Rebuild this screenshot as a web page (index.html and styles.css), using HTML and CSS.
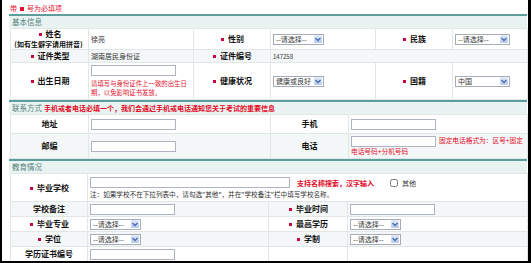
FILE: index.html
```html
<!DOCTYPE html>
<html>

<head>
	<meta charset="UTF-8">
	<title>报名信息</title>
	<link rel="stylesheet" href="styles.css">
</head>

<body>
	<div class="page">
		<p class="note">带<em class="req"></em>号为必填项</p>

		<div class="sec-head">基本信息</div>
		<table class="form six">
			<colgroup>
				<col style="width:78px"><col style="width:105px"><col style="width:77px">
				<col style="width:105px"><col style="width:77px"><col>
			</colgroup>
			<tr class="row-name">
				<th><em class="req"></em>姓名<br><span class="hint">(如有生僻字请用拼音)</span></th>
				<td>徐亮</td>
				<th><em class="req"></em>性别</th>
				<td><span class="select">--请选择--<i class="arrow"><svg viewBox="0 0 8 8"><path d="M1.5 3 L4 5.5 L6.5 3" /></svg></i></span></td>
				<th><em class="req"></em>民族</th>
				<td><span class="select wide">--请选择--<i class="arrow"><svg viewBox="0 0 8 8"><path d="M1.5 3 L4 5.5 L6.5 3" /></svg></i></span></td>
			</tr>
			<tr class="row-id shade">
				<th><em class="req"></em>证件类型</th>
				<td>湖南居民身份证</td>
				<th><em class="req"></em>证件编号</th>
				<td colspan="3" class="num">147258</td>
			</tr>
			<tr class="row-birth">
				<th><em class="req"></em>出生日期</th>
				<td>
					<input class="text" type="text">
					<p class="red-tip">请填写与身份证件上一致的出生日期，以免影响证书发放。</p>
				</td>
				<th><em class="req"></em>健康状况</th>
				<td><span class="select">健康或良好<i class="arrow"><svg viewBox="0 0 8 8"><path d="M1.5 3 L4 5.5 L6.5 3" /></svg></i></span></td>
				<th><em class="req"></em>国籍</th>
				<td><span class="select wide">中国<i class="arrow"><svg viewBox="0 0 8 8"><path d="M1.5 3 L4 5.5 L6.5 3" /></svg></i></span></td>
			</tr>
		</table>

		<div class="sec-head">联系方式<strong class="warn">手机或者电话必填一个，我们会通过手机或电话通知您关于考试的重要信息</strong></div>
		<table class="form four">
			<colgroup>
				<col style="width:78px"><col style="width:182px"><col style="width:78px"><col>
			</colgroup>
			<tr class="row-addr">
				<th>地址</th>
				<td><input class="text" type="text"></td>
				<th>手机</th>
				<td><input class="text" type="text"></td>
			</tr>
			<tr class="row-post shade">
				<th>邮编</th>
				<td><input class="text" type="text"></td>
				<th>电话</th>
				<td><input class="text" type="text"><span class="red-inline">固定电话格式为：区号+固定电话号码+分机号码</span></td>
			</tr>
		</table>

		<div class="sec-head">教育情况</div>
		<table class="form four edu">
			<colgroup>
				<col style="width:77px"><col style="width:181px"><col style="width:79px"><col>
			</colgroup>
			<tr class="row-school">
				<th><em class="req"></em>毕业学校</th>
				<td colspan="3">
					<div class="school-line">
						<input class="text long" type="text">
						<strong class="warn search">支持名称搜索，汉字输入</strong>
						<label class="other"><input type="checkbox">其他</label>
					</div>
					<p class="school-tip">注：如果学校不在下拉列表中，请勾选"其他"，并在"学校备注"栏中填写学校名称。</p>
				</td>
			</tr>
			<tr class="shade">
				<th>学校备注</th>
				<td><input class="text" type="text"></td>
				<th><em class="req"></em>毕业时间</th>
				<td><input class="text" type="text"></td>
			</tr>
			<tr>
				<th><em class="req"></em>毕业专业</th>
				<td><span class="select">--请选择--<i class="arrow"><svg viewBox="0 0 8 8"><path d="M1.5 3 L4 5.5 L6.5 3" /></svg></i></span></td>
				<th><em class="req"></em>最高学历</th>
				<td><span class="select">--请选择--<i class="arrow"><svg viewBox="0 0 8 8"><path d="M1.5 3 L4 5.5 L6.5 3" /></svg></i></span></td>
			</tr>
			<tr class="shade">
				<th><em class="req"></em>学位</th>
				<td><span class="select">--请选择--<i class="arrow"><svg viewBox="0 0 8 8"><path d="M1.5 3 L4 5.5 L6.5 3" /></svg></i></span></td>
				<th><em class="req"></em>学制</th>
				<td><span class="select">--请选择--<i class="arrow"><svg viewBox="0 0 8 8"><path d="M1.5 3 L4 5.5 L6.5 3" /></svg></i></span></td>
			</tr>
			<tr>
				<th>学历证书编号</th>
				<td><input class="text" type="text"></td>
				<th></th>
				<td></td>
			</tr>
		</table>
	</div>
</body>

</html>
```

FILE: styles.css
```css
body {
	margin: 0;
	background-color: #fff;
	font-family: "Noto Sans CJK SC", "Liberation Sans", sans-serif;
	font-size: 7px;
	color: #333;
}

.page {
	height: 263px;
	box-sizing: border-box;
	border-left: 2px solid #000;
	border-right: 3px solid #000;
	border-bottom: 2px solid #000;
	padding: 0 1px 0 7px;
	overflow: hidden;
}

.note {
	margin: 0;
	height: 14px;
	line-height: 16px;
	padding-left: 1px;
	color: #e3102c;
}

.note .req {
	width: 4px;
	height: 4px;
	background-color: #e3102c;
	margin: 0 3px;
}

.req {
	display: inline-block;
	width: 3px;
	height: 3px;
	background-color: #c4063c;
	margin: 0 4px 0 1px;
	vertical-align: middle;
}

.sec-head {
	border-top: 2px solid #5d9d9b;
	background-color: #e9f4f2;
	height: 12px;
	line-height: 12px;
	padding-left: 3px;
	color: #557f7d;
	font-size: 7.5px;
	white-space: nowrap;
}

.warn {
	color: #e4081f;
	font-size: 7px;
	margin-left: 2px;
}

.form {
	width: 518px;
	margin-left: 1px;
	border-collapse: collapse;
	table-layout: fixed;
}

.form th,
.form td {
	border: 1px solid #e1e6e6;
	padding: 0 2px;
	vertical-align: middle;
}

.form th {
	font-size: 8px;
	color: #111;
	line-height: 10px;
	text-align: center;
	white-space: nowrap;
}

.form tr.shade {
	background-color: #f4f7f7;
}

.hint {
	font-size: 7px;
	margin-left: -2px;
}

.row-name {
	height: 20px;
}

.row-id {
	height: 13px;
}

.row-birth {
	height: 37px;
}

.num {
	font-size: 6px;
}

.text {
	width: 85px;
	height: 11px;
	box-sizing: border-box;
	border: 1px solid #aeb3c2;
	padding: 0;
	margin: 0;
	vertical-align: middle;
	background-color: #fff;
}

.text.long {
	width: 200px;
}

.red-tip {
	margin: 3px 0 0;
	line-height: 9px;
	color: #e3102c;
	font-size: 6.4px;
}

.red-inline {
	color: #e3102c;
	font-size: 6.7px;
	line-height: 9px;
	margin-left: 3px;
}

.select {
	display: inline-flex;
	align-items: center;
	justify-content: space-between;
	width: 51px;
	height: 11px;
	box-sizing: border-box;
	border: 1px solid #a6adb8;
	background-color: #fff;
	padding-left: 2px;
	vertical-align: middle;
	color: #333;
}

.select.wide {
	width: 55px;
}

.arrow {
	display: flex;
	width: 8px;
	height: 8px;
	margin-right: 1px;
	background: linear-gradient(#e3ebf8, #b6c9ec);
	border-radius: 1px;
}

.arrow svg {
	width: 8px;
	height: 8px;
	fill: none;
	stroke: #4a6cb4;
	stroke-width: 1.4;
}

.row-addr {
	height: 19px;
}

.row-post {
	height: 25px;
}

.row-post td {
	line-height: 9px;
}

.edu tr {
	height: 15px;
}

.edu tr.row-school {
	height: 28px;
}

.school-line {
	display: flex;
	align-items: center;
	height: 13px;
}

.search {
	margin-left: 7px;
}

.other {
	display: flex;
	align-items: center;
	margin-left: 16px;
}

.other input {
	width: 8px;
	height: 8px;
	margin: 0 4px 0 0;
}

.school-tip {
	margin: 0;
	line-height: 10px;
	white-space: nowrap;
	color: #333;
	font-size: 6.6px;
}
```
